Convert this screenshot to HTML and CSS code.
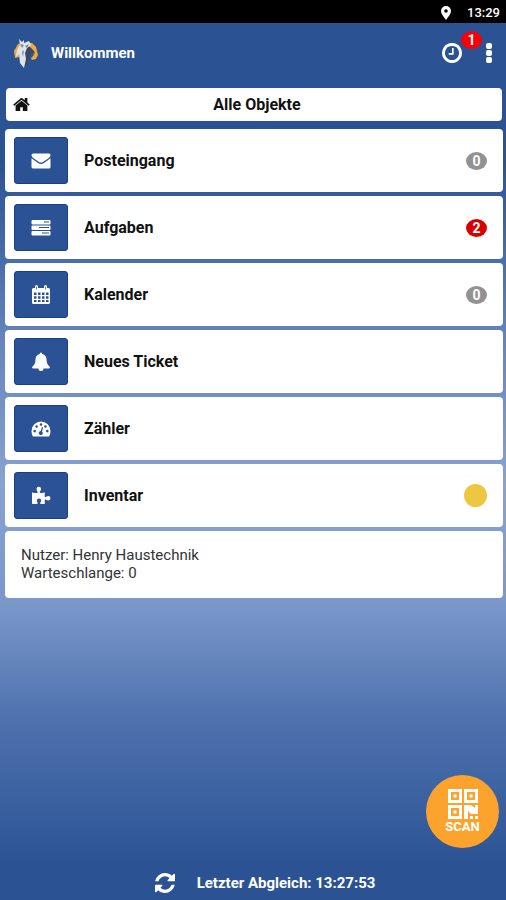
FILE: index.html
```html
<!DOCTYPE html>
<html lang="de">
<head>
<meta charset="utf-8">
<meta name="viewport" content="width=device-width, initial-scale=1">
<title>Willkommen</title>
<link rel="stylesheet" href="styles.css">
</head>
<body>
<div class="statusbar">
  <svg class="pin" viewBox="0 0 10 14" aria-hidden="true"><path fill-rule="evenodd" d="M5 0a5 5 0 0 1 5 5c0 3-2.500 5.500-5 9C2.500 10.500 0 8 0 5a5 5 0 0 1 5-5zm0 3.200a1.800 1.800 0 1 0 0 3.600 1.800 1.800 0 0 0 0-3.600z"/></svg>
  <span>13:29</span>
</div>

<header class="appbar">
  <svg class="logo" viewBox="0 0 24 30" aria-hidden="true">
    <path fill="#f2a93b" d="M1 20L0 13 4 6l4-1-2 7-1 7zM12 5l6 0 4 4 2 8-2 4-4 1-1-2 3-3-2-6-3-2z"/>
    <path fill="#3c4663" d="M12 8l4 1 4 4 1 3-4-2-2 7-4 8z"/>
    <path fill="#dfe5ee" d="M5 1l3 3 2-2v3l5-2 2 4-4 3-2 5 1 6-2 9-4-5-1-9-3 3 1-7 3-5z"/>
    <path fill="#7888a6" d="M6 6l4 1-2 3zM11 8l4-2-2 4zM8 14l2-2-1 7z"/>
  </svg>
  <h1>Willkommen</h1>
  <button class="clock" aria-label="Verlauf">
    <svg viewBox="128 128 1536 1536" aria-hidden="true"><path d="M1024 544v448q0 14-9 23t-23 9h-320q-14 0-23-9t-9-23v-64q0-14 9-23t23-9h224v-352q0-14 9-23t23-9h64q14 0 23 9t9 23zm416 352q0-148-73-273t-198-198-273-73-273 73-198 198-73 273 73 273 198 198 273 73 273-73 198-198 73-273zm224 0q0 209-103 385.500t-279.500 279.500-385.500 103-385.500-103-279.500-279.500-103-385.500 103-385.500 279.500-279.500 385.500-103 385.500 103 279.500 279.500 103 385.500z"/></svg>
    <span class="badge alert">1</span>
  </button>
  <button class="more" aria-label="Menü">
    <svg viewBox="0 0 6 20" aria-hidden="true"><rect width="6" height="6" y="0" rx="2"/><rect width="6" height="6" y="7" rx="2"/><rect width="6" height="6" y="14" rx="2"/></svg>
  </button>
</header>

<main>
  <button class="scope">
    <svg viewBox="64 240 1664 1300" aria-hidden="true"><path d="M1472 992v480q0 26-19 45t-45 19h-384v-384h-256v384h-384q-26 0-45-19t-19-45v-480q0-1 .5-3t.5-3l575-474 575 474q1 2 1 6zm223-69l-62 74q-8 9-21 11h-3q-13 0-21-7l-692-577-692 577q-12 8-24 7-13-2-21-11l-62-74q-8-10-7-23.500t11-21.500l719-599q32-26 76-26t76 26l244 204v-195q0-14 9-23t23-9h192q14 0 23 9t9 23v408l219 182q10 8 11 21.500t-7 23.500z"/></svg>
    <span>Alle Objekte</span>
  </button>

  <nav class="menu">
    <a class="row" href="#posteingang">
      <span class="tile"><svg viewBox="0 0 20 20" aria-hidden="true"><path d="M2 2.500h16a1.500 1.500 0 0 1 1.500 1.500c0 1.500-1 2.500-2 3.200L12 11c-1 .7-3 .7-4 0L2.500 7.200C1.500 6.500.5 5.500.5 4A1.500 1.500 0 0 1 2 2.500zM.5 7.300L7 12c2 1.400 4 1.400 6 0l6.500-4.700V16a1.500 1.500 0 0 1-1.500 1.500H2A1.500 1.500 0 0 1 .5 16z"/></svg></span>
      <span class="label">Posteingang</span><span class="badge">0</span>
    </a>
    <a class="row" href="#aufgaben">
      <span class="tile"><svg viewBox="0 0 20 20" aria-hidden="true"><path fill-rule="evenodd" d="M1.500 2h17q1 0 1 1v2.500q0 1-1 1h-17q-1 0-1-1V3q0-1 1-1zM13 3.500v1h5v-1zM1.500 7.500h17q1 0 1 1V11q0 1-1 1h-17q-1 0-1-1V8.500q0-1 1-1zM8 9v1h10V9zM1.500 13h17q1 0 1 1v2.500q0 1-1 1h-17q-1 0-1-1V14q0-1 1-1zM11 14.500v1h7v-1z"/></svg></span>
      <span class="label">Aufgaben</span><span class="badge due">2</span>
    </a>
    <a class="row" href="#kalender">
      <span class="tile"><svg viewBox="0 0 20 20" aria-hidden="true"><path fill-rule="evenodd" d="M2.500 3H4V1.500q0-1.500 1.500-1.500T7 1.500V3h6V1.500q0-1.500 1.500-1.500T16 1.500V3h1.500Q19 3 19 4.500v13q0 1.500-1.500 1.500h-15Q1 19 1 17.500v-13Q1 3 2.500 3zM3 7.500v2.500h2.500V7.500zm4 0v2.500h2.500V7.500zm4 0v2.500h2.500V7.500zm4 0v2.500h2.500V7.500zM3 11.200v2.500h2.500v-2.500zm4 0v2.500h2.500v-2.500zm4 0v2.500h2.500v-2.500zm4 0v2.500h2.500v-2.500zM3 15v2h2.500v-2zm4 0v2h2.500v-2zm4 0v2h2.500v-2zm4 0v2h2.500v-2zM5.200 1.500v3h.7v-3zm9 0v3h.7v-3z"/></svg></span>
      <span class="label">Kalender</span><span class="badge">0</span>
    </a>
    <a class="row" href="#ticket">
      <span class="tile"><svg viewBox="0 0 20 20" aria-hidden="true"><path d="M10 .5q1.300 0 1.300 1.500 4.200 1 4.200 5.500 0 5 3.500 7.500 0 1.500-1.500 1.500h-5Q12.500 19 10 19t-2.500-2.500h-5Q1 16.500 1 15q3.500-2.500 3.500-7.500Q4.500 3 8.700 2 8.700.5 10 .5z"/></svg></span>
      <span class="label">Neues Ticket</span>
    </a>
    <a class="row" href="#zaehler">
      <span class="tile"><svg viewBox="0 0 20 20" aria-hidden="true"><path fill-rule="evenodd" d="M10 2.500a9.500 9.500 0 0 1 9.500 9.500q0 3-1.300 5.200-.3.300-.7.300h-15q-.4 0-.7-.3Q.5 15 .5 12A9.500 9.500 0 0 1 10 2.500zM3.700 10.800a1.300 1.300 0 1 0 0 2.600 1.300 1.300 0 0 0 0-2.600zM5.600 6.200a1.300 1.300 0 1 0 0 2.600 1.300 1.300 0 0 0 0-2.600zM10 4.200a1.300 1.300 0 1 0 0 2.600 1.300 1.300 0 0 0 0-2.600zm4.400 2a1.300 1.300 0 1 0 0 2.600 1.300 1.300 0 0 0 0-2.600zm1.900 4.600a1.300 1.300 0 1 0 0 2.600 1.300 1.300 0 0 0 0-2.600zM10.900 8l-1.200 4.100a2 2 0 1 0 1.300.4l1.100-4.100z"/></svg></span>
      <span class="label">Zähler</span>
    </a>
    <a class="row" href="#inventar">
      <span class="tile"><svg viewBox="0 0 20 20" aria-hidden="true"><path d="M1 6.500q3 .7 5.500.2C7.500 6 5.500 5 5.500 3q0-2.300 2.300-2.300T10 3c0 2-2 3-1 3.700q2 .5 5-.2-.5 2.500-.2 4.200c.7 1.300 1.700-.7 3.500-.7q2.200 0 2.200 2.200t-2.200 2.200c-1.800 0-2.800-1.700-3.500-.7q-.3 2 .2 4-2.500.5-4.500.1c-1.200-.7.7-1.700.7-3.500q0-1.900-2.200-1.900T5.800 14.300c0 1.800 1.700 2.800.7 3.500Q4 18.300 1 17.700z"/></svg></span>
      <span class="label">Inventar</span><span class="dot"></span>
    </a>
  </nav>

  <section class="info">
    <p>Nutzer: Henry Haustechnik</p>
    <p>Warteschlange: 0</p>
  </section>
</main>

<button class="scan">
  <svg viewBox="0 0 30 30" aria-hidden="true"><path fill-rule="evenodd" d="M0 0h14v14H0zM3 3v8h8V3zM5.500 5.500h3v3h-3zM16 0h14v14H16zM19 3v8h8V3zM21.500 5.500h3v3h-3zM0 16h14v14H0zM3 19v8h8v-8zM5.500 21.500h3v3h-3zM16 16h7l4 3v-3h3v9h-7l-3-3v8h-4zM22 27h3v3h-3zM27 27h3v3h-3z"/></svg>
  <span>SCAN</span>
</button>

<footer class="sync">
  <svg viewBox="128 128 1536 1536" aria-hidden="true"><path d="M1639 1056q0 5-1 7-64 268-268 434.500t-478 166.500q-146 0-282.500-55t-243.500-157l-129 129q-19 19-45 19t-45-19-19-45v-448q0-26 19-45t45-19h448q26 0 45 19t19 45-19 45l-137 137q71 66 161 102t187 36q134 0 250-65t186-179q11-17 53-117 8-23 30-23h192q13 0 22.500 9.500t9.500 22.500zm25-800v448q0 26-19 45t-45 19h-448q-26 0-45-19t-19-45 19-45l138-138q-148-137-349-137-134 0-250 65t-186 179q-11 17-53 117-8 23-30 23h-199q-13 0-22.500-9.500t-9.500-22.500v-7q65-268 270-434.500t480-166.500q146 0 284 55.500t245 156.500l130-129q19-19 45-19t45 19 19 45z"/></svg>
  <span>Letzter Abgleich: 13:27:53</span>
</footer>
</body>
</html>
```
FILE: styles.css
```css
* {
  box-sizing: border-box;
}

body {
  margin: 0;
  min-height: 100vh;
  display: flex;
  flex-direction: column;
  font-family: Roboto, "Liberation Sans", sans-serif;
  font-size: 16px;
  color: #111;
  background: linear-gradient(#2b5394 0%, #2b5394 18%, #4a6dab 29%, #6685bd 38%, #88a3d2 54%, #7b97ca 67%, #5174b0 79%, #2b5394 96%);
}

h1,
p {
  margin: 0;
}

button {
  margin: 0;
  padding: 0;
  border: 0;
  background: none;
  color: inherit;
  font: inherit;
  cursor: pointer;
}

svg {
  display: block;
  fill: currentColor;
}

.statusbar {
  display: flex;
  align-items: center;
  justify-content: flex-end;
  gap: 16px;
  height: 23px;
  padding: 2px 6px 0;
  background: #000;
  color: #fff;
  font-size: 13px;
  font-weight: 500;
}

.pin {
  width: 10px;
  height: 14px;
}

.appbar {
  display: flex;
  align-items: center;
  height: 60px;
  padding: 0 14px;
  color: #fff;
}

.logo {
  width: 24px;
  height: 30px;
}

.appbar h1 {
  flex: 1;
  margin-left: 13px;
  font-size: 15px;
  font-weight: 700;
}

.clock {
  position: relative;
  margin-right: 24px;
}

.clock svg {
  width: 20px;
  height: 20px;
}

.more svg {
  width: 6px;
  height: 20px;
}

.badge {
  display: flex;
  align-items: center;
  justify-content: center;
  width: 21px;
  height: 18px;
  border-radius: 50%;
  background: #929292;
  color: #fff;
  font-size: 14px;
  font-weight: 700;
}

.due {
  background: #d90000;
}

.alert {
  position: absolute;
  left: 19px;
  top: -12px;
  background: #f80008;
}

main {
  padding: 5px 3px 0 5px;
}

.scope {
  display: grid;
  grid-template-columns: 20px 1fr 14px;
  align-items: center;
  width: calc(100% - 2px);
  height: 33px;
  margin: 0 1px 8px;
  padding: 0 7px;
  border-radius: 4px;
  background: #fff;
  font-weight: 700;
}

.scope svg {
  width: 17px;
  height: 15px;
}

.menu {
  display: grid;
  gap: 4px;
}

.row {
  display: flex;
  align-items: center;
  height: 63px;
  padding: 0 16px 0 9px;
  border-radius: 4px;
  background: #fff;
  color: inherit;
  font-weight: 700;
  text-decoration: none;
}

.tile {
  display: flex;
  align-items: center;
  justify-content: center;
  width: 54px;
  height: 47px;
  border: 1px solid #173f8a;
  border-radius: 3px;
  background: #2b5294;
  color: #fff;
}

.tile svg {
  width: 20px;
  height: 20px;
}

.label {
  flex: 1;
  margin-left: 16px;
}

.dot {
  width: 23px;
  height: 23px;
  border-radius: 50%;
  background: #ecc740;
}

.info {
  min-height: 67px;
  margin-top: 4px;
  padding: 15px 16px;
  border-radius: 4px;
  background: #fff;
  color: #333;
  font-size: 15px;
  line-height: 18px;
}

.scan {
  display: flex;
  flex-direction: column;
  align-items: center;
  justify-content: center;
  gap: 1px;
  width: 73px;
  height: 73px;
  margin: auto 7px 18px auto;
  border-radius: 50%;
  background: #fca32d;
  color: #fff;
  font-size: 13px;
  line-height: 14px;
  font-weight: 700;
}

.scan svg {
  width: 30px;
  height: 30px;
}

.sync {
  display: flex;
  align-items: center;
  justify-content: center;
  gap: 22px;
  height: 34px;
  padding-left: 24px;
  color: #fff;
  font-size: 15px;
  font-weight: 700;
}

.sync svg {
  width: 20px;
  height: 20px;
}
```
